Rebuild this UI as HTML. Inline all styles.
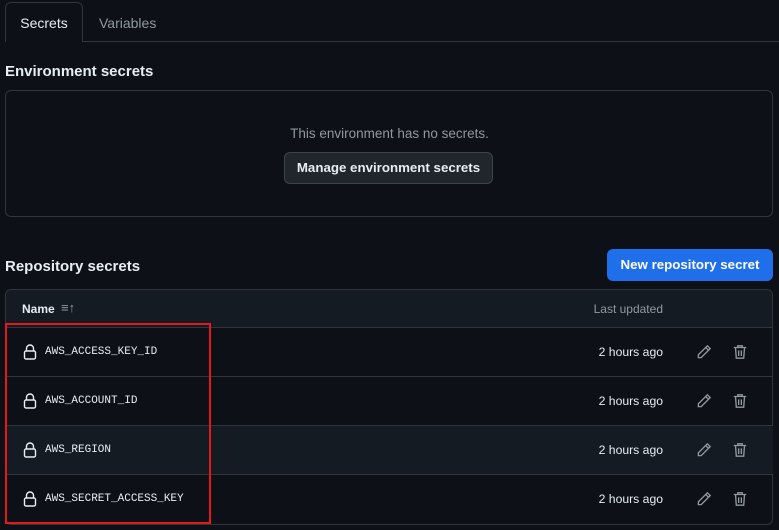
<!DOCTYPE html>
<html><head><style>
*{box-sizing:border-box;margin:0;padding:0}
body{width:779px;height:530px;background:#0d1117;font-family:"Liberation Sans",sans-serif;color:#e6edf3;position:relative;overflow:hidden}
.abs{position:absolute}
.tab{left:5px;top:2px;width:78px;height:40px;border:1px solid #30363d;border-bottom:none;border-radius:6px 6px 0 0;background:#0d1117;font-size:14px;line-height:40px;text-align:center}
h2{font-size:15px;font-weight:bold}
.btn{border:1px solid #3d444d;background:#21262d;border-radius:6px;font-size:13.3px;font-weight:bold;text-align:center}
.row{left:5px;width:768px;height:49px;border-top:1px solid #30363d}
.mono{position:absolute;left:40px;top:18px;font-family:"Liberation Mono",monospace;font-size:11px}
.time{position:absolute;right:110px;top:17px;font-size:12.2px}
.lock{position:absolute;left:18px;top:16px}
.ic{position:absolute;top:15px}
</style></head><body>
<div class="abs" style="left:82px;top:41px;width:697px;height:1px;background:#30363d"></div>
<div class="abs tab">Secrets</div>
<div class="abs" style="left:99px;top:15px;font-size:14px;color:#9198a1">Variables</div>
<h2 class="abs" style="left:5px;top:63px">Environment secrets</h2>
<div class="abs" style="left:5px;top:90px;width:768px;height:127px;border:1px solid #30363d;border-radius:6px"></div>
<div class="abs" style="left:0;width:779px;top:126px;text-align:center;font-size:13.5px;color:#9198a1">This environment has no secrets.</div>
<div class="abs btn" style="left:284px;top:152px;width:209px;height:32px;line-height:30px">Manage environment secrets</div>
<h2 class="abs" style="left:5px;top:258px">Repository secrets</h2>
<div class="abs" style="left:607px;top:249px;width:166px;height:32px;background:#1f6feb;border-radius:6px;font-size:13.3px;font-weight:bold;line-height:32px;text-align:center;color:#fff">New repository secret</div>
<div class="abs" style="left:5px;top:289px;width:768px;height:236px;border:1px solid #30363d;border-radius:6px;overflow:hidden">
<div style="height:38px;background:#151b23;position:relative">
<span class="abs" style="left:16px;top:12px;font-size:12px;font-weight:bold">Name</span>
<span class="abs" style="left:55px;top:10px;font-size:13px;color:#9198a1">≡↑</span>
<span class="abs" style="right:109px;top:12px;font-size:12px;color:#9198a1">Last updated</span>
</div>
</div>
<div id="rows"></div>
<script>
var names=["AWS_ACCESS_KEY_ID","AWS_ACCOUNT_ID","AWS_REGION","AWS_SECRET_ACCESS_KEY"];
var h="";
names.forEach(function(n,i){
h+='<div class="abs row" style="top:'+(327+i*49)+'px;'+(i==2?'background:#151b23;':'')+'">'+
'<svg class="lock" width="14" height="16" viewBox="0 0 14 16" fill="none" stroke="#e6edf3" stroke-width="1.4"><path d="M3.5 7V4.5a3.5 3.5 0 0 1 7 0V7"/><rect x="1.5" y="7" width="11" height="8" rx="1.5"/></svg>'+
'<span class="mono">'+n+'</span><span class="time">2 hours ago</span>'+
'<svg class="ic" style="left:690px" width="18" height="18" viewBox="0 0 16 16" fill="none" stroke="#9198a1" stroke-width="1.2"><path d="M11 2.5l2.5 2.5-8 8H3v-2.5z M9.5 4l2.5 2.5"/></svg>'+
'<svg class="ic" style="left:726px" width="18" height="18" viewBox="0 0 16 16" fill="none" stroke="#9198a1" stroke-width="1.2"><path d="M2.5 4h11M6 4V2.5h4V4M4 4l.7 9.5h6.6L12 4M6.8 6.5v5M9.2 6.5v5"/></svg>'+
'</div>';});
document.getElementById("rows").innerHTML=h;
</script>
<div class="abs" style="left:5px;top:323px;width:206px;height:201px;border:2px solid #e5191c"></div>
</body></html>
